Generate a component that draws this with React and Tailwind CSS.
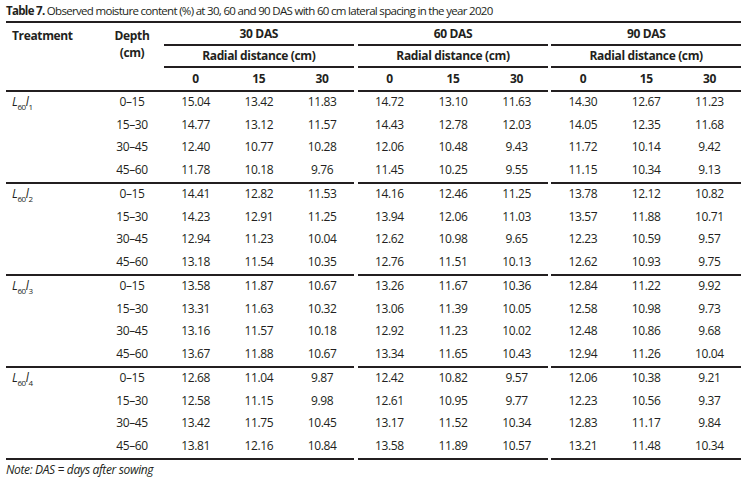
import React from "react";

const sections = [
  {
    sub: "1",
    rows: [
      ["0–15", "15.04", "13.42", "11.83", "14.72", "13.10", "11.63", "14.30", "12.67", "11.23"],
      ["15–30", "14.77", "13.12", "11.57", "14.43", "12.78", "12.03", "14.05", "12.35", "11.68"],
      ["30–45", "12.40", "10.77", "10.28", "12.06", "10.48", "9.43", "11.72", "10.14", "9.42"],
      ["45–60", "11.78", "10.18", "9.76", "11.45", "10.25", "9.55", "11.15", "10.34", "9.13"],
    ],
  },
  {
    sub: "2",
    rows: [
      ["0–15", "14.41", "12.82", "11.53", "14.16", "12.46", "11.25", "13.78", "12.12", "10.82"],
      ["15–30", "14.23", "12.91", "11.25", "13.94", "12.06", "11.03", "13.57", "11.88", "10.71"],
      ["30–45", "12.94", "11.23", "10.04", "12.62", "10.98", "9.65", "12.23", "10.59", "9.57"],
      ["45–60", "13.18", "11.54", "10.35", "12.76", "11.51", "10.13", "12.62", "10.93", "9.75"],
    ],
  },
  {
    sub: "3",
    rows: [
      ["0–15", "13.58", "11.87", "10.67", "13.26", "11.67", "10.36", "12.84", "11.22", "9.92"],
      ["15–30", "13.31", "11.63", "10.32", "13.06", "11.39", "10.05", "12.58", "10.98", "9.73"],
      ["30–45", "13.16", "11.57", "10.18", "12.92", "11.23", "10.02", "12.48", "10.86", "9.68"],
      ["45–60", "13.67", "11.88", "10.67", "13.34", "11.65", "10.43", "12.94", "11.26", "10.04"],
    ],
  },
  {
    sub: "4",
    rows: [
      ["0–15", "12.68", "11.04", "9.87", "12.42", "10.82", "9.57", "12.06", "10.38", "9.21"],
      ["15–30", "12.58", "11.15", "9.98", "12.61", "10.95", "9.77", "12.23", "10.56", "9.37"],
      ["30–45", "13.42", "11.75", "10.45", "13.17", "11.52", "10.34", "12.83", "11.17", "9.84"],
      ["45–60", "13.81", "12.16", "10.84", "13.58", "11.89", "10.57", "13.21", "11.48", "10.34"],
    ],
  },
];

const line = "border-b-2 border-[#231f20]";

function HeaderGroup({ title, w }) {
  return (
    <div className={`${w} flex flex-col font-bold`}>
      <div className={`h-[23px] ${line} flex items-center justify-center`}>{title}</div>
      <div className={`h-[22px] ${line} flex items-center justify-center`}>Radial distance (cm)</div>
      <div className={`h-[24px] ${line} grid grid-cols-3`}>
        <div className="flex items-center justify-center">0</div>
        <div className="flex items-center justify-center">15</div>
        <div className="flex items-center justify-center">30</div>
      </div>
    </div>
  );
}

function DataGroup({ rows, offset, w }) {
  return (
    <div className={`${w} ${line} flex flex-col`}>
      {rows.map((r, i) => (
        <div key={i} className="h-[22.5px] grid grid-cols-3 pb-[2px]">
          {[0, 1, 2].map((j) => (
            <div key={j} className="flex items-center justify-center">
              {r[offset + j]}
            </div>
          ))}
        </div>
      ))}
    </div>
  );
}

export default function App() {
  return (
    <div
      className="w-[747px] h-[480px] bg-white px-[6px] text-[#231f20] text-[12px] tracking-[-0.03em]"
      style={{ fontFamily: '"Open Sans", "Noto Sans", sans-serif' }}
    >
      <div className={`h-[23px] ${line} flex items-center text-[11.5px] tracking-[-0.06em]`}>
        <span>
          <span className="font-bold">Table 7.</span> Observed moisture content (%) at 30, 60 and 90 DAS with 60 cm lateral spacing in the year 2020
        </span>
      </div>
      <div className="flex">
        <div className={`w-[158px] ${line} flex font-bold`}>
          <div className="w-[94px] pl-[6px] pt-[4px]">Treatment</div>
          <div className="w-[64px] flex flex-col items-center pt-[4px] leading-[17px]">
            <span>Depth</span>
            <span>(cm)</span>
          </div>
        </div>
        <HeaderGroup title="30 DAS" w="w-[190px]" />
        <div className="w-[4px]" />
        <HeaderGroup title="60 DAS" w="w-[191px]" />
        <div className="w-[3px]" />
        <HeaderGroup title="90 DAS" w="w-[190px]" />
      </div>
      {sections.map((s, si) => (
        <div key={si} className="flex">
          <div className={`w-[158px] ${line} flex`}>
            <div className="w-[94px] pl-[6px] h-[22.5px] pb-[2px] flex items-center italic">
              <span>
                L<sub className="text-[8px] not-italic align-[-2px]">60</sub>l
                <sub className="text-[8px] not-italic align-[-2px]">{s.sub}</sub>
              </span>
            </div>
            <div className="w-[64px] flex flex-col">
              {s.rows.map((r, i) => (
                <div key={i} className="h-[22.5px] pb-[2px] flex items-center justify-center">
                  {r[0]}
                </div>
              ))}
            </div>
          </div>
          <DataGroup rows={s.rows} offset={1} w="w-[190px]" />
          <div className="w-[4px]" />
          <DataGroup rows={s.rows} offset={4} w="w-[191px]" />
          <div className="w-[3px]" />
          <DataGroup rows={s.rows} offset={7} w="w-[190px]" />
        </div>
      ))}
      <div className="h-[20px] flex items-center italic">Note: DAS = days after sowing</div>
    </div>
  );
}
